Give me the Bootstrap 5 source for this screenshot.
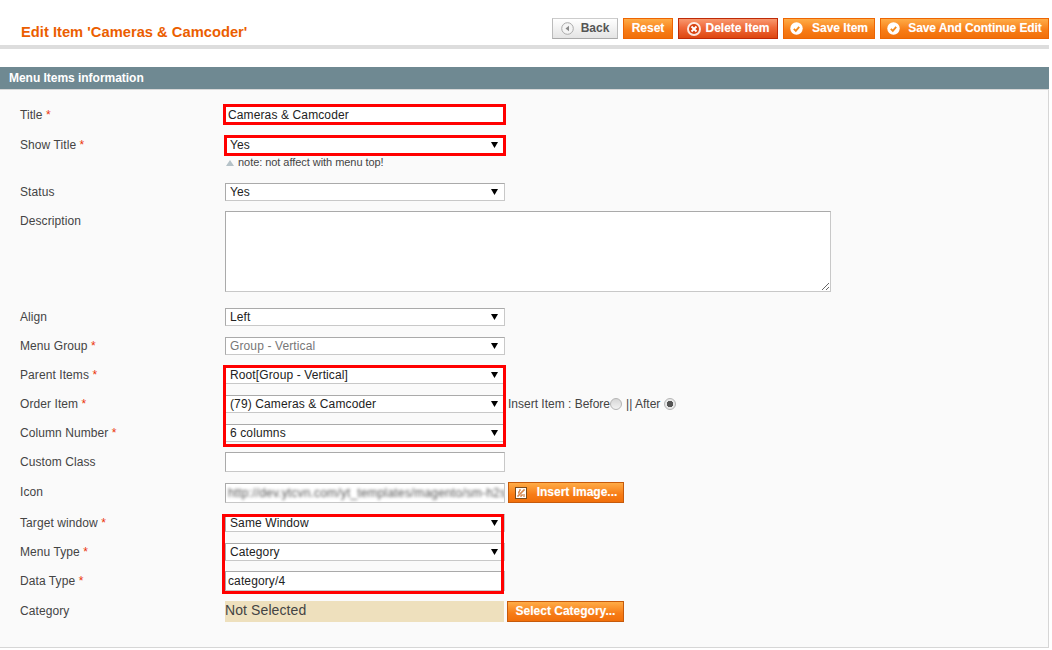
<!DOCTYPE html>
<html lang="en">
<head>
<meta charset="utf-8">
<title>Edit Item</title>
<link href="https://cdn.jsdelivr.net/npm/bootstrap@5.3.0/dist/css/bootstrap.min.css" rel="stylesheet">
<style>
html,body{background:#fff;}
body{font:12px/18px "Liberation Sans",Arial,sans-serif;color:#444;margin:0;letter-spacing:.08px;}
.page-wrap{width:1049px;height:650px;position:relative;overflow:hidden;}
.top-bar{height:49px;padding:18px 0 0 21px;border-bottom:4px solid #ddd;}
.page-title{font:bold 14.7px/28px "Liberation Sans",Arial,sans-serif;color:#eb5e00;margin:0;letter-spacing:.02px;}
.act-row{gap:5px;}
.act{font:bold 12px/19px "Liberation Sans",Arial,sans-serif;height:21px;padding:0;border-radius:0;border:1px solid #ed6502;color:#fff;background:linear-gradient(#ffac47,#f77c16 60%,#f16f0a);display:inline-flex;align-items:center;justify-content:center;gap:6px;text-shadow:0 0 1px rgba(255,255,255,.35);letter-spacing:0;}
.act:hover,.act:active{color:#fff;background:linear-gradient(#ffac47,#f77c16 60%,#f16f0a);border-color:#ed6502;}
.act-back{width:66px;color:#555;background:linear-gradient(#fff,#e4e4e4);border-color:#ccc #bbb #aaa;gap:7px;}
.act-back:hover{color:#555;background:linear-gradient(#fff,#e4e4e4);border-color:#ccc #bbb #aaa;}
.act-reset{width:50px;}
.act-del{width:100px;background:linear-gradient(#f8996f,#f06a3a 45%,#dd4610);border-color:#bf2a07;gap:3px;}
.act-save{width:92px;gap:9px;}
.act-cont{width:169px;gap:8px;letter-spacing:-.1px;}
.act-side{width:116px;border-color:#c65a0b;gap:10px;margin-left:3px;}
.panel-head{margin-top:18px;height:23px;background:#6f8992;border-bottom:1px solid #d8d8d8;color:#fff;font:bold 12px/22px "Liberation Sans",Arial,sans-serif;padding-left:9px;letter-spacing:-.03px;}
.panel-body{height:558px;background:#fafafa;border-right:1px solid #d6d6d6;border-bottom:1px solid #d6d6d6;padding-top:15px;}
.frow{display:flex;align-items:flex-start;height:29px;}
.flab{width:225px;flex:none;padding-left:20px;color:#444;}
.req{color:#eb340a;}
.lh20{line-height:20px;}
.lab-desc{padding-top:1px;}
.field-sel{width:280px;height:18px;padding:0 18px 0 4px;font:12px/16px "Liberation Sans",Arial,sans-serif;letter-spacing:.12px;color:#222;border-radius:0;border:1px solid;border-color:#aaa #c8c8c8 #c8c8c8 #aaa;background-color:#fff;background-image:url("data:image/svg+xml,%3Csvg xmlns='http://www.w3.org/2000/svg' width='7' height='6'%3E%3Cpath d='M0 0h7L3.500 6z' fill='%23000'/%3E%3C/svg%3E");background-repeat:no-repeat;background-position:right 6px center;background-size:7px 6px;appearance:none;box-shadow:none;}
.field-sel:disabled{color:#777;background-color:#fff;}
.field-in{width:280px;height:20px;padding:0 2px;font:12px/18px "Liberation Sans",Arial,sans-serif;letter-spacing:.12px;color:#222;border-radius:0;border:1px solid;border-color:#aaa #c8c8c8 #c8c8c8 #aaa;background:#fff;box-shadow:none;}
.field-area{width:606px;height:81px;border-radius:0;border:1px solid;border-color:#aaa #c8c8c8 #c8c8c8 #aaa;background:#fff;padding:2px;display:block;}
.field-note{font-size:11px;line-height:13px;margin-top:2px;padding-left:1px;display:flex;align-items:center;gap:4px;color:#444;letter-spacing:-.05px;}
.tri{width:0;height:0;border-left:4px solid transparent;border-right:4px solid transparent;border-bottom:6px solid #b5c2c8;}
.blur-box{width:280px;height:20px;border:1px solid;border-color:#aaa #c8c8c8 #c8c8c8 #aaa;background:#fff;overflow:hidden;white-space:nowrap;padding-left:2px;line-height:18px;}
.blur-txt{filter:blur(1.4px);color:#555;display:inline-block;letter-spacing:.17px;}
.no-sel{width:279px;height:21px;background:#eee0bd;font-size:14px;line-height:18px;color:#444;letter-spacing:.1px;}
.ins-txt{margin-left:3px;display:flex;align-items:center;height:18px;white-space:nowrap;color:#444;letter-spacing:0;}
.ins-sep{padding:0 4px;}
.rad{appearance:none;width:12px;height:12px;border-radius:50%;margin:0;border:1px solid #b4b4b4;background:linear-gradient(#d6d6d6,#f2f2f2);flex:none;}
.rad:checked{background:radial-gradient(circle,#555 0 3px,#e8e8e8 3.500px);}
.red-box{position:absolute;border:3px solid #f00;pointer-events:none;}
.rb1{left:223px;top:104px;width:283px;height:21px;}
.rb2{left:224px;top:135px;width:282px;height:21px;}
.rb3{left:223px;top:365px;width:283px;height:82px;}
.rb4{left:222px;top:514px;width:282px;height:80px;}
.row-title{height:31px;}
.row-show{height:47px;}
.row-status{height:28px;}
.row-desc{height:97px;}
.row-col{height:28px;}
.row-w31{height:31px;}
.row-data{height:30px;}
.btn-ins{margin-top:-1px;}
.lab-icon{margin-top:-1px;}
.btn-cat{width:117px;}
</style>
</head>
<body>
<div class="page-wrap">
  <div class="top-bar d-flex align-items-start justify-content-between">
    <h1 class="page-title">Edit Item 'Cameras &amp; Camcoder'</h1>
    <div class="d-flex act-row">
      <button type="button" class="btn act act-back"><svg width="13" height="13" viewBox="0 0 13 13"><circle cx="6.500" cy="6.500" r="5.800" fill="#f4f4f4" stroke="#aaa"/><path d="M8 3.800v5.400L4.500 6.500z" fill="#888"/></svg>Back</button>
      <button type="button" class="btn act act-reset">Reset</button>
      <button type="button" class="btn act act-del"><svg width="16" height="16" viewBox="0 0 16 16"><circle cx="8" cy="8" r="7" fill="#fff" opacity=".85"/><circle cx="8" cy="8" r="5" fill="#d8400e"/><path d="M5.500 5.500l5 5M10.500 5.500l-5 5" stroke="#fff" stroke-width="2"/></svg>Delete Item</button>
      <button type="button" class="btn act act-save"><svg width="13" height="13" viewBox="0 0 13 13"><circle cx="6.500" cy="6.500" r="6.200" fill="#fff"/><path d="M3.800 6.800l2 2 3.400-4" fill="none" stroke="#f28a1c" stroke-width="1.800"/></svg>Save Item</button>
      <button type="button" class="btn act act-cont"><svg width="13" height="13" viewBox="0 0 13 13"><circle cx="6.500" cy="6.500" r="6.200" fill="#fff"/><path d="M3.800 6.800l2 2 3.400-4" fill="none" stroke="#f28a1c" stroke-width="1.800"/></svg>Save And Continue Edit</button>
    </div>
  </div>
  <div class="panel-head">Menu Items information</div>
  <form class="panel-body">
    <div class="frow row-title"><div class="flab lh20">Title <span class="req">*</span></div><input class="field-in" value="Cameras &amp; Camcoder"></div>
    <div class="frow row-show"><div class="flab">Show Title <span class="req">*</span></div><div><select class="field-sel form-select"><option>Yes</option></select><div class="field-note"><span class="tri"></span>note: not affect with menu top!</div></div></div>
    <div class="frow row-status"><div class="flab">Status</div><select class="field-sel form-select"><option>Yes</option></select></div>
    <div class="frow row-desc"><div class="flab lab-desc">Description</div><textarea class="field-area"></textarea></div>
    <div class="frow"><div class="flab">Align</div><select class="field-sel form-select"><option>Left</option></select></div>
    <div class="frow"><div class="flab">Menu Group <span class="req">*</span></div><select class="field-sel form-select" disabled><option>Group - Vertical</option></select></div>
    <div class="frow"><div class="flab">Parent Items <span class="req">*</span></div><select class="field-sel form-select"><option>Root[Group - Vertical]</option></select></div>
    <div class="frow"><div class="flab">Order Item <span class="req">*</span></div><select class="field-sel form-select"><option>(79) Cameras &amp; Camcoder</option></select><div class="ins-txt">Insert Item : Before<input type="radio" name="ins" class="rad"><span class="ins-sep">|| After</span><input type="radio" name="ins" class="rad" checked></div></div>
    <div class="frow row-col"><div class="flab">Column Number <span class="req">*</span></div><select class="field-sel form-select"><option>6 columns</option></select></div>
    <div class="frow row-w31"><div class="flab lh20">Custom Class</div><input class="field-in"></div>
    <div class="frow row-w31"><div class="flab lh20 lab-icon">Icon</div><div class="blur-box"><span class="blur-txt">http://dev.ytcvn.com/yt_templates/magento/sm-h2s</span></div><button type="button" class="btn act act-side btn-ins"><svg width="12" height="12" viewBox="0 0 12 12"><rect x=".5" y=".5" width="11" height="11" fill="#fff" stroke="#7a4a1a"/><path d="M3 10V8h2V6h2V4h2V2M3 6h1V4h1V2M6 10V8h2M9 10V7" stroke="#c9651a" fill="none"/></svg>Insert Image...</button></div>
    <div class="frow"><div class="flab">Target window <span class="req">*</span></div><select class="field-sel form-select"><option>Same Window</option></select></div>
    <div class="frow row-col"><div class="flab">Menu Type <span class="req">*</span></div><select class="field-sel form-select"><option>Category</option></select></div>
    <div class="frow row-data"><div class="flab lh20">Data Type <span class="req">*</span></div><input class="field-in" value="category/4"></div>
    <div class="frow"><div class="flab lh20">Category</div><div class="no-sel">Not Selected</div><button type="button" class="btn act act-side btn-cat">Select Category...</button></div>
  </form>
  <div class="red-box rb1"></div>
  <div class="red-box rb2"></div>
  <div class="red-box rb3"></div>
  <div class="red-box rb4"></div>
</div>
<script src="https://cdn.jsdelivr.net/npm/bootstrap@5.3.0/dist/js/bootstrap.bundle.min.js"></script>
</body>
</html>
